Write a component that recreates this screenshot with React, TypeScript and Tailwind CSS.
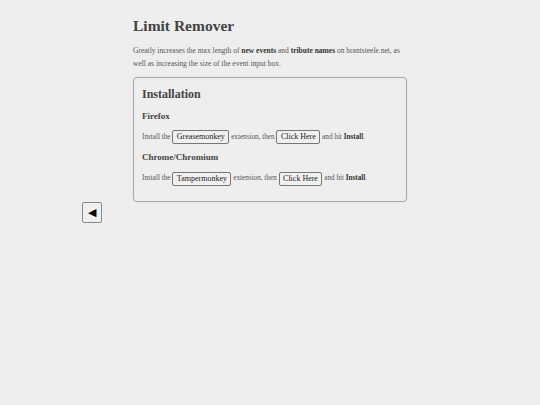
import React from "react";

function Btn({ children }: { children: React.ReactNode }) {
  return (
    <span className="inline-block border border-[#777] rounded-[2px] bg-[#f0f0f0] px-[3.5px] text-[8px] leading-[12px] text-[#222] align-middle">
      {children}
    </span>
  );
}

export default function App() {
  return (
    <div className="min-h-[405px] w-full bg-[#eeeeee] text-[#555] pt-[15px]" style={{ fontFamily: '"Liberation Serif", serif' }}>
      <div className="w-[274px] mx-auto">
        <h1 className="text-[15.5px] font-bold leading-[22px] text-[#444]">Limit Remover</h1>
        <p className="text-[7.5px] leading-[13px] mt-[7px]">
          Greatly increases the max length of <b className="text-[#333]">new events</b> and{" "}
          <b className="text-[#333]">tribute names</b> on brantsteele.net, as well as increasing the size of the event input box.
        </p>
        <div className="mt-[7px] border border-[#aaa] rounded-[4px] px-[8px] pt-[8px] pb-[15px] shadow-[0_0_1px_#bbb]">
          <h2 className="text-[12px] font-bold leading-[16px] text-[#444]">Installation</h2>
          <h3 className="text-[9px] font-bold leading-[12px] mt-[8px] text-[#444]">Firefox</h3>
          <p className="text-[7.2px] leading-[14px] mt-[8px]">
            Install the <Btn>Greasemonkey</Btn> extension, then <Btn>Click Here</Btn> and hit{" "}
            <b className="text-[#333]">Install</b>.
          </p>
          <h3 className="text-[9px] font-bold leading-[12px] mt-[7px] text-[#444]">Chrome/Chromium</h3>
          <p className="text-[7.2px] leading-[14px] mt-[8px]">
            Install the <Btn>Tampermonkey</Btn> extension, then <Btn>Click Here</Btn> and hit{" "}
            <b className="text-[#333]">Install</b>.
          </p>
        </div>
      </div>
      <div className="ml-[82px] mt-[0px]">
        <button className="w-[20px] h-[21px] border border-[#888] rounded-[2px] bg-[#f0f0f0] flex items-center justify-center text-[11px] leading-none text-black">
          ◀
        </button>
      </div>
    </div>
  );
}
